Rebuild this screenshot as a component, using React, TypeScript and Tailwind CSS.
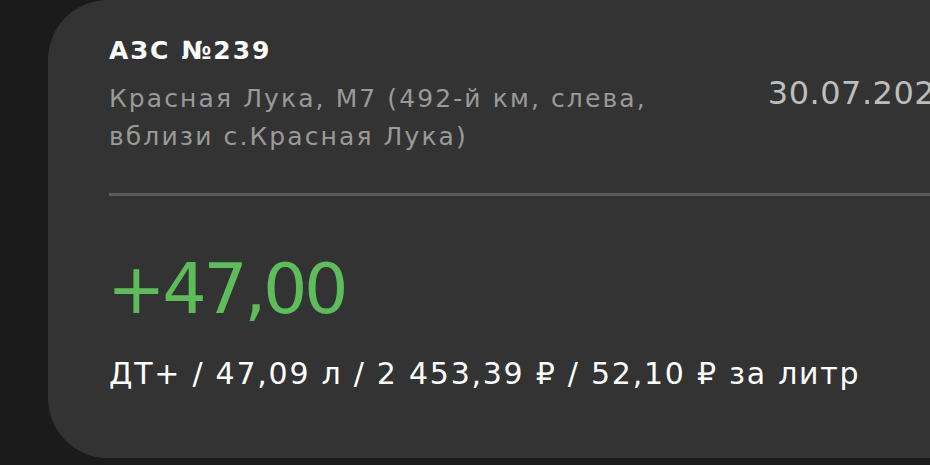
const App = () => {
  return (
    <div
      className="w-[930px] h-[465px] overflow-hidden bg-[#1b1b1b] flex"
      style={{ fontFamily: '"DejaVu Sans", "Noto Sans", sans-serif' }}
    >
      <section className="ml-[48px] w-[960px] h-[458px] shrink-0 rounded-l-[60px] bg-[#333333] pl-[61px] pr-[52px] pt-[34px]">
        <header className="flex items-start">
          <div className="w-[590px]">
            <h1 className="text-[25px] leading-[34px] font-semibold tracking-[2px] text-white">АЗС №239</h1>
            <p className="mt-[12px] text-[25px] leading-[38px] tracking-[2.1px] text-[#9a9a9a]">
              Красная Лука, М7 (492-й км, слева, вблизи с.Красная Лука)
            </p>
          </div>
          <span className="ml-auto mt-[39px] text-[32px] leading-[40px] tracking-[0.5px] text-[#bdbdbd]">30.07.2023</span>
        </header>
        <hr className="mt-[37px] border-0 h-[3px] bg-[#5b5b5b]" />
        <div className="mt-[53px] -ml-[2px] text-[70px] leading-[80px] tracking-[-3.5px] text-[#5cbd5a]">+47,00</div>
        <p className="mt-[25px] text-[30px] leading-[40px] tracking-[1.75px] text-white">
          ДТ+ / 47,09 л / 2 453,39 ₽ / 52,10 ₽ за литр
        </p>
      </section>
    </div>
  )
}

export default App
